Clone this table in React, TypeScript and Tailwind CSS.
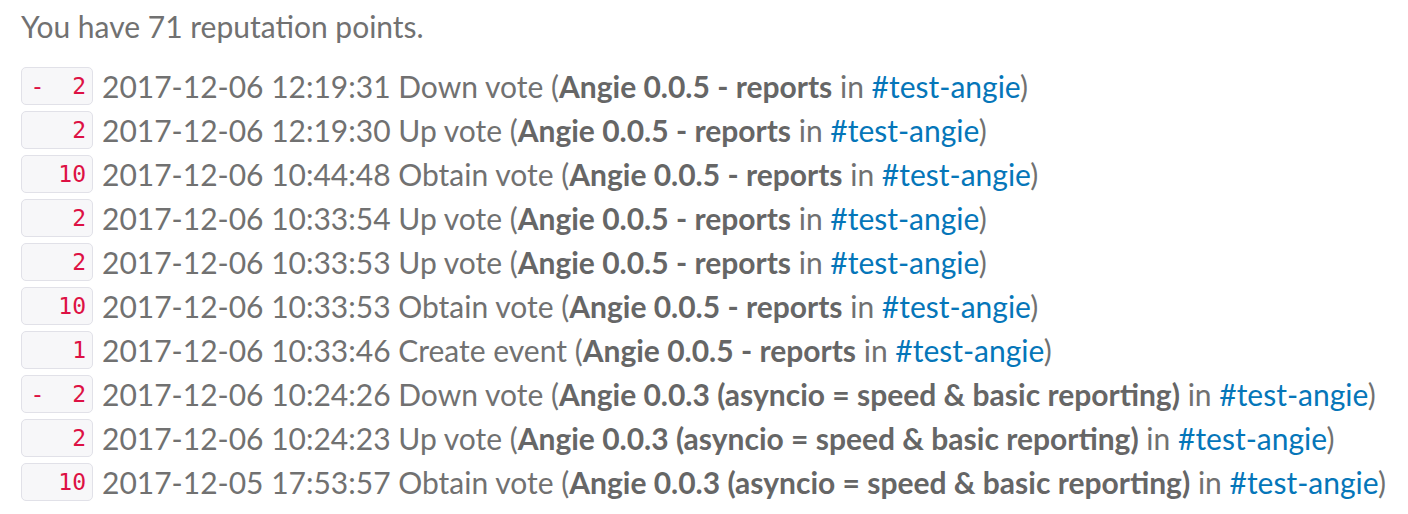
const rows = [
  { pts: '-  2', time: '2017-12-06 12:19:31', kind: 'Down vote', title: 'Angie 0.0.5 - reports' },
  { pts: '   2', time: '2017-12-06 12:19:30', kind: 'Up vote', title: 'Angie 0.0.5 - reports' },
  { pts: '  10', time: '2017-12-06 10:44:48', kind: 'Obtain vote', title: 'Angie 0.0.5 - reports' },
  { pts: '   2', time: '2017-12-06 10:33:54', kind: 'Up vote', title: 'Angie 0.0.5 - reports' },
  { pts: '   2', time: '2017-12-06 10:33:53', kind: 'Up vote', title: 'Angie 0.0.5 - reports' },
  { pts: '  10', time: '2017-12-06 10:33:53', kind: 'Obtain vote', title: 'Angie 0.0.5 - reports' },
  { pts: '   1', time: '2017-12-06 10:33:46', kind: 'Create event', title: 'Angie 0.0.5 - reports' },
  { pts: '-  2', time: '2017-12-06 10:24:26', kind: 'Down vote', title: 'Angie 0.0.3 (asyncio = speed & basic reporting)' },
  { pts: '   2', time: '2017-12-06 10:24:23', kind: 'Up vote', title: 'Angie 0.0.3 (asyncio = speed & basic reporting)' },
  { pts: '  10', time: '2017-12-05 17:53:57', kind: 'Obtain vote', title: 'Angie 0.0.3 (asyncio = speed & basic reporting)' },
];

export default function App() {
  return (
    <div className="min-h-screen bg-white pl-[21px] pt-[4px] font-['Lato',sans-serif] text-[30px] text-[#717171]">
      <p className="mb-[19px] leading-[44px]">You have 71 reputation points.</p>
      <ul className="flex flex-col gap-[6px]">
        {rows.map((r, i) => (
          <li key={i} className="flex items-center gap-[9px] leading-[38px]">
            <span className="h-[38px] w-[72px] shrink-0 whitespace-pre rounded-[5px] border border-[#e1e1e8] bg-[#f7f7f9] pr-[6px] text-right font-['DejaVu_Sans_Mono',monospace] text-[23px] leading-[36px] text-[#dd1144]">
              {r.pts}
            </span>
            <span className="whitespace-nowrap">
              {r.time} {r.kind} (<b className="font-bold text-[#666]">{r.title}</b> in{' '}
              <a href="#" className="text-[#0576b9]">#test-angie</a>)
            </span>
          </li>
        ))}
      </ul>
    </div>
  );
}
